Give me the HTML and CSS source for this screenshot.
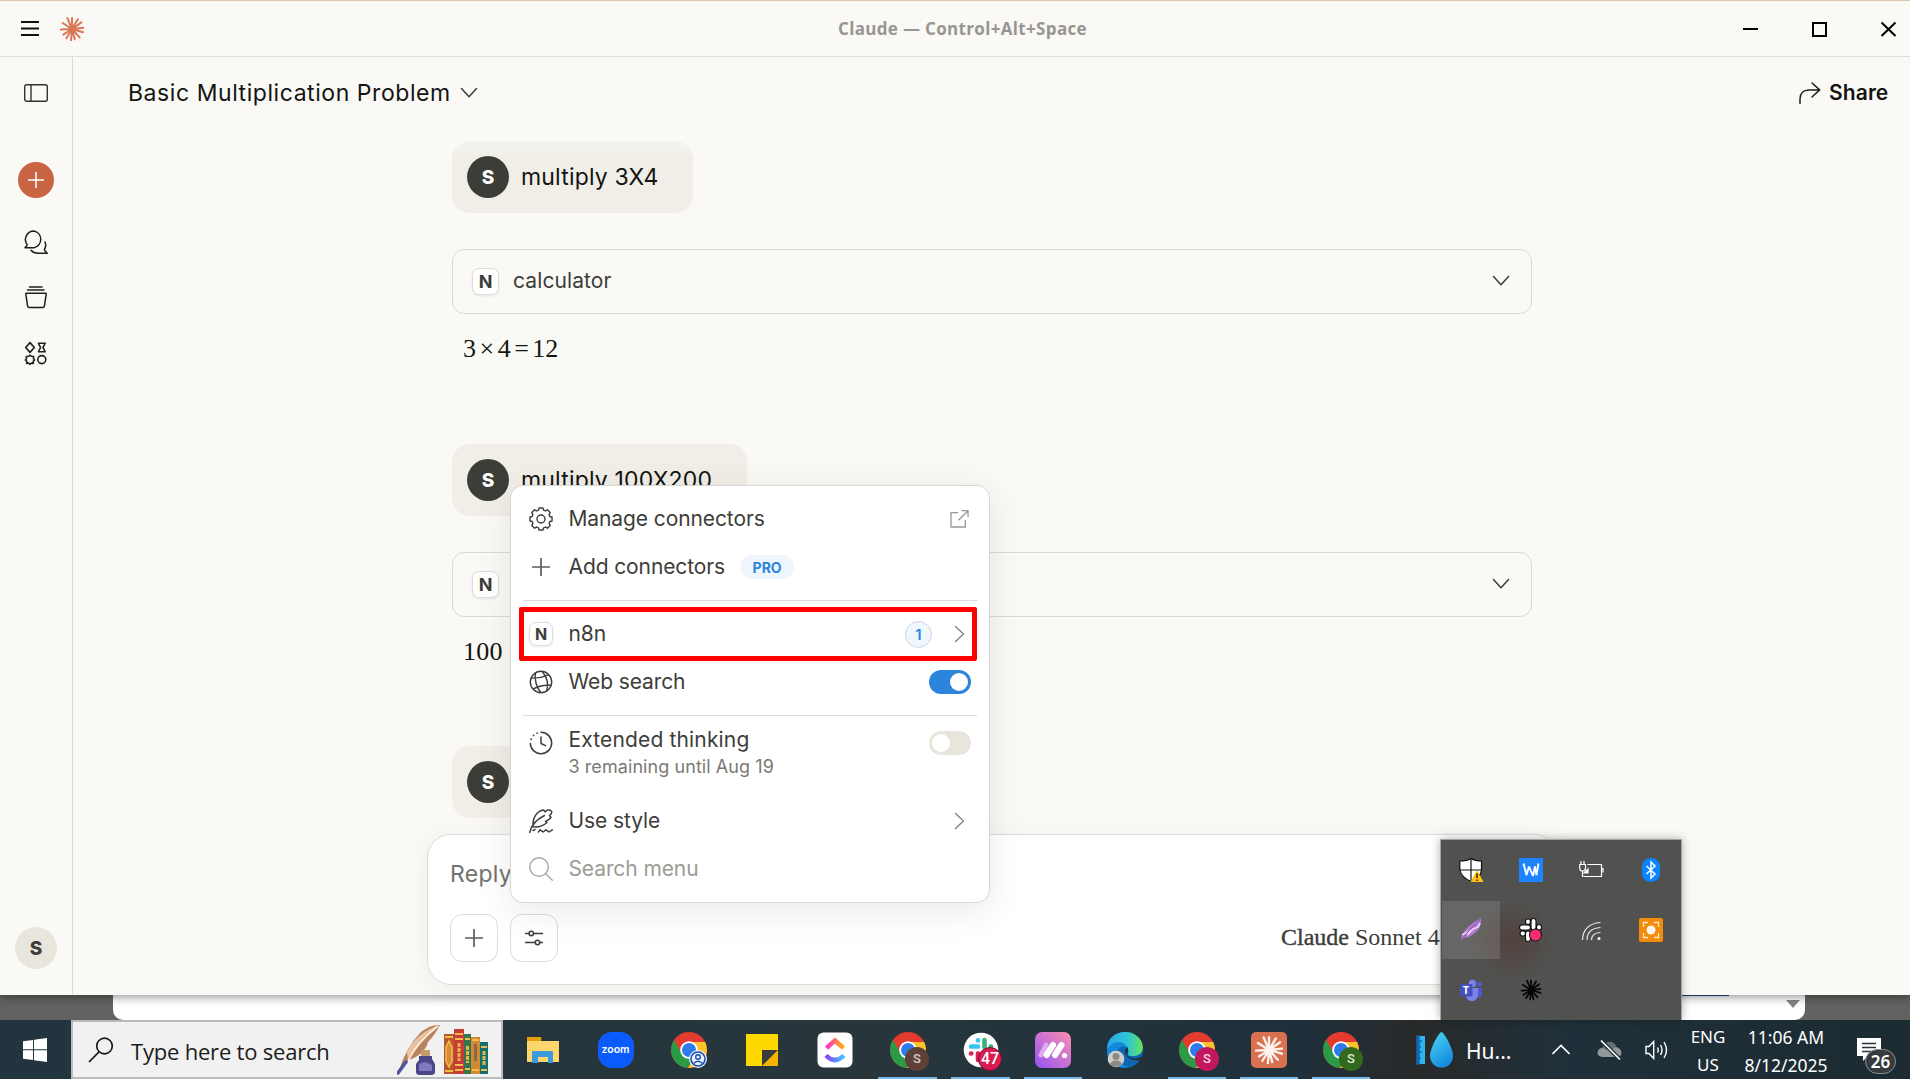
FILE: index.html
```html
<!DOCTYPE html>
<html lang="en">
<head>
<meta charset="utf-8">
<title>Claude</title>
<link rel="stylesheet" href="styles.css">
</head>
<body>
<svg class="defs" width="0" height="0" aria-hidden="true">
  <symbol id="burst" viewBox="-12 -12 24 24">
    <path d="M0 0V-11M0 0L5.8-9.8M0 0L9.4-6.6M0 0L11.2-1.2M0 0L11 3.2M0 0L7.6 8.4M0 0L2.8 10.4M0 0L-1 11.4M0 0L-5.6 9.2M0 0L-8.6 5.6M0 0L-11.2 .6M0 0L-9.4-6M0 0L-4.6-10.8" stroke="currentColor" stroke-width="2" stroke-linecap="round" fill="none"/>
    <circle r="3.2" fill="currentColor"/>
  </symbol>
  <symbol id="chrome" viewBox="0 0 36 36">
    <circle cx="18" cy="18" r="18" fill="#e33b2e"/>
    <path d="M18 10H34.1A18 18 0 0 1 16.88 35.94L24.93 22L18 18z" fill="#fcc42c"/>
    <path d="M3.02 8.06L11.07 22L18 18L24.93 22L16.88 35.94A18 18 0 0 1 3.02 8.06z" fill="#2b9a47"/>
    <circle cx="18" cy="18" r="8.8" fill="#fff"/><circle cx="18" cy="18" r="7" fill="#2f7bea"/>
  </symbol>
  <symbol id="down" viewBox="0 0 18 12"><path d="M1.5 1.5L9 9.8L16.5 1.5" fill="none" stroke="currentColor" stroke-width="1.5" stroke-linecap="round" stroke-linejoin="round"/></symbol>
  <symbol id="right" viewBox="0 0 12 18"><path d="M1.5 1.5L9.5 9L1.5 16.5" fill="none" stroke="currentColor" stroke-width="1.4" stroke-linecap="round" stroke-linejoin="round"/></symbol>
  <symbol id="plus" viewBox="0 0 18 18"><path d="M9 0V18M0 9H18" stroke="currentColor" stroke-width="1.7" fill="none"/></symbol>
</svg>

<div class="app">
  <header class="titlebar">
    <svg class="burger" viewBox="0 0 18 15"><path d="M0 1H18M0 7.5H18M0 14H18" stroke="#111" stroke-width="2"/></svg>
    <svg class="logo"><use href="#burst"/></svg>
    <div class="wintitle">Claude — Control+Alt+Space</div>
    <svg class="winctl" viewBox="0 0 154 16" fill="none" stroke="#000" stroke-width="2"><path d="M0 8H15"/><rect x="70" y="2" width="13" height="13"/><path d="M138.500 1.500L152.500 15M152.500 1.500L138.500 15"/></svg>
  </header>

  <div class="body">
    <nav class="side">
      <svg class="panel" viewBox="0 0 24 18" fill="none" stroke="#333330" stroke-width="1.4"><rect x=".7" y=".7" width="22.600" height="16.600" rx="2"/><path d="M7 1V17"/></svg>
      <span class="new"><svg width="18" height="18"><use href="#plus"/></svg></span>
      <svg class="chats" viewBox="0 0 24 24" fill="none" stroke="#1f1e1d" stroke-width="1.500" stroke-linecap="round" stroke-linejoin="round"><path d="M10 .9A8.600 8.600 0 0 1 10 17.700H1C2.500 16.500 3.300 15.600 3 14.400A8.600 8.600 0 0 1 10 .9zM21 12C22.200 14.800 21.800 17.300 20.300 19.400C20.600 20.900 22 21.800 23.200 23.200H15C11.500 23.400 8.800 22.400 7 20.300"/></svg>
      <svg class="box" viewBox="0 0 24 24" fill="none" stroke="#1f1e1d" stroke-width="1.500" stroke-linecap="round" stroke-linejoin="round"><path d="M5.500 2H18M3.500 5H20M2.500 8.200H21.500Q22.400 8.200 22.200 9.200L20.400 21.200Q20.200 22.600 18.800 22.600H5.200Q3.800 22.600 3.600 21.200L1.800 9.200Q1.600 8.200 2.500 8.200z"/></svg>
      <svg class="shapes" viewBox="0 0 24 24" fill="none" stroke="#1f1e1d" stroke-width="1.600" stroke-linejoin="round"><path d="M6 1.600L10.300 6.500L6 11.400L1.700 6.500zM13.800 2.200H21.800M13.800 10.800H21.800M14.800 2.200C15 5 16.500 5.500 16.500 6.500S15 8 14.800 10.800M20.800 2.200C20.600 5 19 5.500 19 6.500S20.600 8 20.800 10.800M6 14.200L7.500 15.300L9.700 15.500L9.400 17.500L10.600 19L9.200 20.300L9.400 22.400L7.400 22L6 23.300L4.600 22L2.600 22.400L2.800 20.300L1.400 19L2.600 17.500L2.300 15.500L4.500 15.300z"/><circle cx="17.800" cy="18.600" r="4"/></svg>
      <span class="me">S</span>
    </nav>

    <main class="main">
      <div class="chathead">
        <span class="chattitle">Basic Multiplication Problem</span><svg class="chev"><use href="#down"/></svg>
        <svg class="arrow" viewBox="0 0 22 23" fill="none" stroke="#1f1e1d" stroke-width="1.500" stroke-linecap="round" stroke-linejoin="round"><path d="M1 21.500V17C1 11.500 4.500 7.900 10 7.900H20.500M13 1L20.700 7.900L13 15"/></svg>
        <span class="share">Share</span>
      </div>
      <div class="thread">
        <div class="bubble fade"><span class="av">S</span><span class="msg">multiply 3X4</span></div>
        <div class="tool"><span class="n">N</span><span class="tname">calculator</span><svg class="chev"><use href="#down"/></svg></div>
        <p class="answer">3 × 4 = 12</p>
        <div class="bubble"><span class="av">S</span><span class="msg">multiply 100X200</span></div>
        <div class="tool"><span class="n">N</span><svg class="chev"><use href="#down"/></svg></div>
        <p class="answer last">100</p>
        <div class="bubble short"><span class="av">S</span></div>
      </div>
      <div class="composer">
        <div class="reply">Reply</div>
        <div class="tools">
          <span class="btn"><svg width="18" height="18"><use href="#plus"/></svg></span>
          <span class="btn"><svg width="20" height="18" viewBox="0 0 20 18" fill="none" stroke="#3d3d3a" stroke-width="1.500"><path d="M1 4.500H5M9.500 4.500H19M1 13.500H11M16 13.500H19"/><circle cx="7.300" cy="4.500" r="2.200"/><circle cx="13.500" cy="13.500" r="2.200"/></svg></span>
          <span class="model"><b>Claude</b> Sonnet 4</span>
        </div>
      </div>
    </main>
  </div>

  <div class="menu">
    <div class="row"><svg class="ic" viewBox="-12 -12 24 24" fill="none" stroke="#3d3d3a" stroke-width="1.400" stroke-linejoin="round"><path d="M11.030-1.950V1.950L8.840 2.540L8.050 4.460L9.170 6.420L6.420 9.170L4.460 8.050L2.540 8.840L1.950 11.030H-1.950L-2.540 8.840L-4.460 8.050L-6.420 9.170L-9.170 6.420L-8.050 4.460L-8.840 2.540L-11.030 1.950V-1.950L-8.840-2.540L-8.050-4.460L-9.170-6.420L-6.420-9.170L-4.460-8.050L-2.540-8.840L-1.950-11.030H1.950L2.540-8.840L4.460-8.050L6.420-9.170L9.170-6.420L8.050-4.460L8.840-2.540z"/><circle r="4"/></svg><span class="lab">Manage connectors</span><svg class="ext" viewBox="0 0 20 20" fill="none" stroke="#9a9893" stroke-width="1.300"><path d="M9 3.700H2V18H16.300V11M12.500 1.700H19V8M19 1.700L9.500 11.200"/></svg></div>
    <div class="row"><svg class="ic" viewBox="-3 -3 24 24" color="#5e5d59"><use href="#plus" width="18" height="18"/></svg><span class="lab">Add connectors</span><span class="pro">PRO</span></div>
    <hr>
    <div class="row"><span class="n small">N</span><span class="lab">n8n</span><span class="count">1</span><svg class="go"><use href="#right"/></svg></div>
    <div class="row"><svg class="ic" viewBox="-12 -12 24 24" fill="none" stroke="#3d3d3a" stroke-width="1.400"><circle r="10.700"/><path d="M-5.500-9.300C-7-2 -4 6 0 10.700M1-10.700C6-5 8 2 5.500 9.300M-10-4C-4-3.500 3-5 8-7.300M-8 7.300C-4 4.500 4 3 10.300 3.300"/></svg><span class="lab">Web search</span><span class="toggle on"></span></div>
    <hr>
    <div class="row tall"><svg class="ic" viewBox="-12 -12 24 24" fill="none" stroke="#3d3d3a" stroke-width="1.500" stroke-linecap="round" stroke-linejoin="round"><path d="M0-10.700A10.700 10.700 0 1 1-10.700 .5M0-6V.5L4.500 2.700"/><path d="M-3.900-9.900h.01M-7.400-7.600h.01M-9.900-3.800h.01" stroke-width="1.800"/></svg><span class="stack"><span class="lab">Extended thinking</span><span class="sub">3 remaining until Aug 19</span></span><span class="toggle"></span></div>
    <div class="row"><svg class="ic" viewBox="0 0 24 24" fill="none" stroke="#3d3d3a" stroke-width="1.500" stroke-linecap="round" stroke-linejoin="round"><path d="M.8 23.300C2 17.500 6.500 11 15.500 6.500M4.200 16.500C3 9.500 8 1.500 14.500 .9L16 2.800L18.500 1C23.500 .5 24 4 20.500 6.500L22 8.500C20 11 18 11.500 16.500 12.300L18 13.500C14 17 8.500 18.500 3.800 17.800M4 21.500L6 20.500M9.500 23C10.500 22 10.800 21 11.300 20.800L14 23L17 20.800L20 23L23.300 20.800"/></svg><span class="lab">Use style</span><svg class="go"><use href="#right"/></svg></div>
    <div class="row"><svg class="ic" viewBox="0 0 24 24" fill="none" stroke="#a9a8a4" stroke-width="1.400" stroke-linecap="round"><circle cx="10" cy="10" r="9.300"/><path d="M16.800 16.800L23.300 23.300"/></svg><span class="lab dim">Search menu</span></div>
    <div class="highlight"></div>
  </div>
</div>

<div class="behind"><div class="page"><i class="blueline"></i><i class="scroll"></i></div></div>

<div class="taskbar">
  <div class="start"><svg width="24" height="24" viewBox="0 0 24 24" fill="#fff"><path d="M0 3.300L10 2V11.300H0zM11 1.800L24 0V11.300H11zM0 12.300H10V22L0 20.700zM11 12.300H24V24L11 22.200z"/></svg></div>
  <div class="search">
    <svg class="glass" viewBox="0 0 26 26" fill="none" stroke="#1a1a1a" stroke-width="1.700"><circle cx="16.500" cy="9" r="7.800"/><path d="M11 14.800L1 25"/></svg>
    <span class="hint">Type here to search</span>
    <svg class="books" viewBox="0 0 92 52">
      <path d="M2 46Q10 22 24 8Q34 0 43 1Q38 11 31 18Q28 30 12 36z" fill="#b98560"/><path d="M10 28Q18 10 42 1Q28 12 20 22Q13 31 11 36z" fill="#e8c2a0"/><path d="M11 37Q20 18 41 2" stroke="#fff1dc" stroke-width="1.600" fill="none"/><path d="M9 38L1 49" stroke="#4a559c" stroke-width="3.500" stroke-linecap="round"/>
      <rect x="24" y="26" width="9" height="6" rx="1" fill="#c99b66"/><path d="M22 32H35V35L38 40V48Q38 51 34 51H23Q19 51 19 48V40L22 36z" fill="#4b4686"/><path d="M22 40Q28 36 35 41V47H22z" fill="#8078c0"/>
      <rect x="47" y="10" width="10" height="40" fill="#b8562c"/><rect x="57" y="5" width="10" height="45" fill="#c63b37"/><rect x="67" y="10" width="7" height="40" fill="#33764f"/><rect x="74" y="13" width="9" height="37" fill="#d08a35"/><rect x="83" y="18" width="8" height="32" fill="#137070"/>
      <path d="M48 13H56M48 47H56M58 10H66M58 15H66M58 41H66M58 46H66M68 15H73M68 45H73M75 16H82M75 46H82M84 23H90M84 46H90" stroke="#f0bd4a" stroke-width="2"/><path d="M52 17L55 23V37L52 43L49 37V23z" fill="#d98b3a" stroke="#f0bd4a" stroke-width="1.500"/><path d="M62 19V37M70.500 22V39M87 27V41" stroke="#e6b549" stroke-width="3" stroke-dasharray="4 1"/><path d="M78.500 20V37" stroke="#8a6a45" stroke-width="3"/>
    </svg>
  </div>
  <div class="apps">
    <div class="a"><svg viewBox="0 0 36 36"><path d="M2 5H16V9H34V30H2z" fill="#ffd66b"/><path d="M2 5H15Q17 5 16 9H2z" fill="#e3a008"/><path d="M7 31V20Q7 19 8 19H27Q28 19 28 20V31H23V25H13V31z" fill="#3a9be0"/></svg></div>
    <div class="a"><svg viewBox="0 0 36 36"><rect width="36" height="36" rx="14" fill="#0b5cff"/></svg><span class="zoomtxt">zoom</span></div>
    <div class="a"><svg viewBox="0 0 36 36"><use href="#chrome"/><circle cx="27" cy="27" r="9" fill="#e8f0fe"/><circle cx="27" cy="27" r="7" fill="none" stroke="#1d4fb5" stroke-width="1.600"/><circle cx="27" cy="25" r="2.300" fill="none" stroke="#1d4fb5" stroke-width="1.400"/><path d="M22.500 31.500Q27 27 31.500 31.500" fill="none" stroke="#1d4fb5" stroke-width="1.500"/></svg></div>
    <div class="a"><svg viewBox="0 0 36 36"><path d="M2 2H34V18L18 34H2z" fill="#fdd900"/><path d="M18 18H34L18 34z" fill="#3a3a3a"/><path d="M34 18V34H18z" fill="#f4b400"/></svg></div>
    <div class="a"><svg viewBox="0 0 36 36"><defs><linearGradient id="cu1"><stop stop-color="#ff2bd0"/><stop offset="1" stop-color="#ffb000"/></linearGradient><linearGradient id="cu2"><stop stop-color="#8a3ffc"/><stop offset="1" stop-color="#45c8ff"/></linearGradient></defs><rect x=".5" y=".5" width="35" height="35" rx="6" fill="#fff"/><path d="M9.500 16L18 8.500L26.500 16" fill="none" stroke="url(#cu1)" stroke-width="4.500"/><path d="M9 23.500Q18 32.500 27 23.500" fill="none" stroke="url(#cu2)" stroke-width="4.500"/></svg></div>
    <div class="a open"><svg viewBox="0 0 36 36"><use href="#chrome"/></svg><span class="badge brown">S</span></div>
    <div class="a open"><svg viewBox="0 0 36 36"><circle cx="18" cy="18" r="17.300" fill="#fff"/><g stroke-width="4.600" stroke-linecap="round" fill="none"><path d="M8 14.500H15M15 8.300V8.500" stroke="#36c5f0"/><path d="M21.500 8V15M28 14.500H27.800" stroke="#2eb67d"/><path d="M21.500 21.500H28M21.500 28V27.800" stroke="#ecb22e"/><path d="M15 21.500V28M8 21.500H8.300" stroke="#e01e5a"/></g></svg><span class="badge n47">47</span></div>
    <div class="a w72 open"><svg viewBox="0 0 36 36"><defs><linearGradient id="mk" x1="0" y1="1" x2="1" y2="0"><stop stop-color="#9552f6"/><stop offset="1" stop-color="#fb90af"/></linearGradient></defs><rect width="36" height="36" rx="7" fill="url(#mk)"/><path d="M6 23L11 13" stroke="#e0a9f3" stroke-width="5" stroke-linecap="round"/><path d="M11.500 23L18 13M20 23L26.500 13" stroke="#fff" stroke-width="6" stroke-linecap="round"/><circle cx="29.500" cy="23.500" r="2.600" fill="#fff"/></svg></div>
    <div class="a w72"><svg viewBox="0 0 36 36"><defs><linearGradient id="ed"><stop stop-color="#24a9ef"/><stop offset=".6" stop-color="#2fc6d0"/><stop offset="1" stop-color="#68e553"/></linearGradient></defs><circle cx="18" cy="18" r="18" fill="#0d67b5"/><path d="M0 17C0-5 35-6 36 16C35 25 24 25 21 23C24 14 12 6 0 17z" fill="url(#ed)"/><path d="M0 18C5 8 16 8 20 15C13 13 9 18 11 24Q14 35 22 35C9 38-1 30 0 18z" fill="#1188da"/><path d="M20 23C25 28 31 27 37 23V29.500L32 28.500Q22 29 18 21.500Q17 17 20.500 15Q22 18 20 23z" fill="#24323b"/><circle cx="9" cy="27" r="8.300" fill="#d0cecb"/><circle cx="9" cy="24.500" r="3.500" fill="#8b8782"/><path d="M3 32.500Q4 28.500 9 28.500T15 32.500Q9 37 3 32.500z" fill="#8b8782"/></svg></div>
    <div class="a w72 open"><svg viewBox="0 0 36 36"><use href="#chrome"/></svg><span class="badge pink">S</span></div>
    <div class="a w72 open"><svg viewBox="0 0 36 36" color="#fdf3ee"><rect width="36" height="36" rx="5" fill="#d97150"/><use href="#burst" x="4" y="4" width="28" height="28"/></svg></div>
    <div class="a w72 open"><svg viewBox="0 0 36 36"><use href="#chrome"/></svg><span class="badge green">S</span></div>
  </div>
  <div class="weather"><svg width="38" height="38" viewBox="0 0 38 38"><defs><linearGradient id="dr" x1="0" x2=".5" y2="1"><stop stop-color="#4fd5f5"/><stop offset="1" stop-color="#158de0"/></linearGradient></defs><rect x="1" y="5" width="8" height="28" fill="#2fb4f0"/><path d="M1 5H3V33H1zM3 10H6M3 16H5M3 21H6M3 27H5" stroke="#1268b0" stroke-width="1.500" fill="#1268b0"/><path d="M25.500 1C28 1 37 17 37 25A11.500 11.500 0 0 1 14 25C14 17 23 1 25.500 1z" fill="url(#dr)"/></svg><span>Hu...</span></div>
  <div class="sys">
    <svg class="up" viewBox="0 0 18 11" fill="none" stroke="#fff" stroke-width="1.600"><path d="M.5 10L9 1.500L17.500 10"/></svg>
    <svg class="cloud" viewBox="0 0 25 20"><path d="M5 17Q0 16 .6 12Q1.500 8 5.500 8Q8 1 14 2Q18 3 19 7Q24 8 24.500 13Q24 17 20 17z" fill="#929799"/><path d="M5.500 8Q8 1 14 2Q18 3 19 7L12 11z" fill="#666e72"/><path d="M4 .5L23 19.500" stroke="#26343b" stroke-width="4"/><path d="M4 .5L23 19.500" stroke="#fff" stroke-width="1.500"/></svg>
    <svg class="vol" viewBox="0 0 24 20" fill="none" stroke="#fff" stroke-width="1.400"><path d="M1 6.500H4L8.700 1.500V18.500L4 13.500H1zM12.500 7.500Q14 10 12.500 12.500M15.500 5Q18.500 10 15.500 15M19 2Q24 10 19 18"/></svg>
    <div class="lang">ENG<br>US</div>
    <div class="clock">11:06 AM<br>8/12/2025</div>
    <div class="notif"><svg width="24" height="24" viewBox="0 0 24 24"><path d="M0 0H24V18H11L6 23V18H0z" fill="#fff"/><path d="M5 5.500H19M5 9.500H19M5 13.500H19" stroke="#25323a" stroke-width="1.300"/></svg><span class="cnt">26</span></div>
  </div>
</div>

<div class="tray">
  <span class="c"><svg viewBox="0 0 24 24"><path d="M12 .5Q16 3 22.500 3V12Q22 19 12 23.500Q2 19 .8 12V3Q8 3 12 .5z" fill="#fff" stroke="#111" stroke-width="1.200"/><path d="M12 1V23M1 12H22.500" stroke="#111" stroke-width="1.200"/><path d="M18 12L24.500 24H11.500z" fill="#fdbf12"/><path d="M18 15.500V20M18 21.500V23" stroke="#111" stroke-width="1.300"/></svg></span>
  <span class="c"><svg viewBox="0 0 24 24"><rect width="24" height="24" fill="#1d84ff"/><path d="M4.500 5.500L7.500 17L10 8.500L14 18L16 8.500L17.500 17L19.500 5.500" fill="none" stroke="#fff" stroke-width="1.900" stroke-linejoin="bevel"/></svg></span>
  <span class="c"><svg viewBox="0 0 24 24" fill="none" stroke="#fff" stroke-width="1.200"><path d="M8.500 6.500H22.500V18.500H4.500M22.500 10.500H24V14.500M3.500 13V19M.7 6.500H6.500V10Q6.500 13 3.600 13T.7 10zM2 3V6M5 3V6"/><path d="M5 15L9 11V15z" fill="#fff"/></svg></span>
  <span class="c"><svg viewBox="0 0 24 24"><rect x="3" width="18" height="24" rx="8.500" fill="#0a84ff"/><path d="M7.500 8L16 16L12 20V4L16 8L7.500 16" fill="none" stroke="#fff" stroke-width="1.500"/></svg></span>
  <span class="c sel"><svg viewBox="0 0 24 24"><path d="M2 23Q2 15 10 8Q16 3 22 0Q23 7 18 13Q12 19 5 20z" fill="#a968cd"/><path d="M3 17L10 13L8 17L14 11L19 9L21 5" stroke="#e6c7f7" stroke-width="1.800" fill="none"/><path d="M1.500 23.500Q9 12 21.500 1" stroke="#6d3596" stroke-width="1" fill="none"/></svg></span>
  <span class="c"><svg viewBox="0 0 24 24"><g stroke-linecap="round"><path d="M3 9.500H9M9 3.500V4M14.500 3V9.500M20 9.500V9M3.500 15.500H4M9 15.500V21M14.500 15.500H20" stroke="#111" stroke-width="6"/><path d="M3 9.500H9M9 3.500V4M14.500 3V9.500M20 9.500V9M3.500 15.500H4M9 15.500V21M14.500 15.500H20" stroke="#fff" stroke-width="3.800"/></g><circle cx="16.500" cy="17" r="6" fill="#f62d73" stroke="#151515"/></svg></span>
  <span class="c"><svg viewBox="0 0 24 24" fill="none" stroke="#e8e8e8" stroke-width="1.200"><path d="M3.500 22Q4 6 21.500 4.500M8 22Q8 10.500 21.500 9.500M12.500 22Q12.500 15 21.500 14.500"/><circle cx="20" cy="20.500" r="1.500" fill="#fff" stroke="none"/></svg></span>
  <span class="c"><svg viewBox="0 0 24 24"><rect width="24" height="24" rx="2" fill="#f38b0b"/><circle cx="12" cy="12" r="4.500" fill="#fff6e8"/><path d="M4.500 9V4.500H9M15 4.500H19.500V9M19.500 15V19.500H15M9 19.500H4.500V15" fill="none" stroke="#ffe9c9" stroke-width="1.300"/></svg></span>
  <span class="c"><svg viewBox="0 0 24 24"><circle cx="13.500" cy="5.500" r="3.700" fill="#7b83eb"/><circle cx="20.500" cy="6" r="2.600" fill="#5059c9"/><path d="M17 10H23V17Q22 20 18 19z" fill="#5059c9"/><path d="M8 10H19V17Q18 23 13 23T7 18z" fill="#7b83eb"/><rect x="1" y="6" width="12.500" height="12.500" rx="1" fill="#4550bd"/></svg><b class="tee">T</b></span>
  <span class="c"><svg viewBox="0 0 24 24" color="#050505"><use href="#burst" x="1.500" y="1.500" width="21" height="21"/></svg></span>
</div>
</body>
</html>
```
FILE: styles.css
```css
* { box-sizing: border-box; }
body { margin: 0; width: 1910px; height: 1079px; overflow: hidden; position: relative; display: flex; flex-direction: column; font-family: "Inter", "Noto Sans", sans-serif; background: #646260; color: #141413; }
svg { display: block; flex: none; }
.defs { position: absolute; }

.app { position: relative; z-index: 1; height: 995px; flex: none; display: flex; flex-direction: column; background: #faf9f5; border-top: 1px solid #dcc5b3; box-shadow: 0 1px 10px rgba(0,0,0,.5); }
.titlebar { height: 56px; flex: none; display: flex; align-items: center; padding: 0 13px 0 21px; border-bottom: 1px solid #dededa; }
.burger { width: 18px; height: 15px; }
.logo { width: 24px; height: 24px; margin-left: 21px; color: #d97757; }
.wintitle { width: 250px; margin-left: 754px; font: 700 17px "Open Sans", "Noto Sans", sans-serif; letter-spacing: .33px; color: #979692; white-space: nowrap; }
.winctl { width: 154px; height: 16px; margin-left: auto; }

.body { flex: 1; display: flex; min-height: 0; }
.side { width: 73px; border-right: 1px solid #dbdad5; display: flex; flex-direction: column; align-items: center; padding-top: 27px; }
.panel { width: 24px; height: 18px; }
.new { width: 36px; height: 36px; margin-top: 60px; border-radius: 50%; background: #c96442; color: #fff; display: grid; place-items: center; }
.new svg { width: 16px; height: 16px; }
.chats, .box, .shapes { width: 24px; height: 24px; margin-top: 32px; }
.box { margin-top: 31px; }
.me { margin-top: auto; margin-bottom: 26px; width: 42px; height: 42px; border-radius: 50%; background: #e8e6dc; color: #3d3d3a; font-weight: 800; font-size: 19px; display: grid; place-items: center; }

.main { flex: 1; display: flex; flex-direction: column; min-width: 0; }
.chathead { height: 72px; flex: none; display: flex; align-items: center; padding: 0 20px 0 55px; }
.chev { width: 18px; height: 12px; color: #3d3d3a; }
.chathead .chev { margin-left: 10px; }
.chattitle { font-size: 23px; letter-spacing: .56px; white-space: nowrap; width: 322px; }
.arrow { width: 22px; height: 23px; margin-left: auto; }
.share { margin-left: 8px; margin-right: 1px; padding-bottom: 1px; font-size: 21px; font-weight: 600; letter-spacing: .1px; width: 60px; }
.thread { flex: 1; min-height: 0; overflow: hidden; margin-left: 379px; width: 1080px; padding-top: 12px; }
.bubble { width: fit-content; height: 72px; display: flex; align-items: center; padding: 0 35px 0 15px; border-radius: 18px; background: #f0eee6; }
.short { width: 240px; }
.fade { background: linear-gradient(#f4f3ee, #f0eee6 30%); }
.av { width: 42px; height: 42px; border-radius: 50%; background: #3d3d38; color: #fff; font-weight: 800; font-size: 19px; display: grid; place-items: center; }
.msg { margin-left: 12px; font-size: 23px; letter-spacing: .18px; white-space: nowrap; }
.tool { margin-top: 36px; height: 65px; border: 1px solid #dad9d4; border-radius: 12px; display: flex; align-items: center; padding: 0 21px 0 19px; }
.tool .chev { margin-left: auto; margin-bottom: 1px; }
.n { width: 27px; height: 27px; border: 1px solid #deddd9; border-radius: 7px; background: #fff; box-shadow: 0 1px 3px rgba(0,0,0,.08); color: #3d3d3a; font-weight: 700; font-size: 18px; display: grid; place-items: center; }
.tname { margin-left: 14px; font-size: 21px; line-height: 24px; letter-spacing: .1px; padding-bottom: 1px; color: #3d3d3a; }
.answer { margin: 0 0 78px; height: 52px; padding: 17px 0 0 11px; font: 26px/36px "Liberation Serif", serif; word-spacing: -3px; white-space: nowrap; }
.answer.last { margin-bottom: 77px; letter-spacing: .3px; }
.composer { flex: none; width: 1131px; height: 151px; margin: 0 0 10px 354px; border: 1px solid #deddd8; border-radius: 24px; background: #fff; box-shadow: 0 3px 24px rgba(0,0,0,.05); display: flex; flex-direction: column; padding: 20px 22px 22px; }
.reply { font-size: 23px; line-height: 38px; letter-spacing: .3px; color: #73726c; }
.tools { margin-top: auto; display: flex; align-items: center; }
.btn { width: 48px; height: 48px; margin-right: 12px; border: 1px solid #dcdbd7; border-radius: 12px; display: grid; place-items: center; color: #5e5d59; }
.model { margin-left: 711px; padding-bottom: 1px; font: 24px "Liberation Serif", serif; color: #3d3d3a; white-space: nowrap; }
.model b { font-weight: 500; -webkit-text-stroke: .4px #3d3d3a; }

.menu { position: absolute; left: 510px; top: 484px; width: 480px; height: 418px; padding: 9px 12px; border: 1px solid #d9d8d4; border-radius: 13px; background: #fff; box-shadow: 0 8px 36px rgba(0,0,0,.09); color: #3d3d3a; }
.row { height: 48px; display: flex; align-items: center; padding: 0 6px; }
.tall { height: 72px; align-items: flex-start; }
.ic { width: 24px; height: 24px; }
.tall .ic { margin-top: 6px; }
.row .n { width: 24px; height: 24px; font-size: 16px; }
.lab { margin-left: 15.5px; padding-bottom: 1px; font-size: 21px; letter-spacing: -.1px; white-space: nowrap; }
.dim { color: #9c9a95; }
.stack { display: flex; flex-direction: column; }
.stack .lab { line-height: 30px; padding-bottom: 0; letter-spacing: .15px; }
.sub { margin-left: 15.5px; font-size: 18px; line-height: 24px; letter-spacing: .07px; color: #7a7974; white-space: nowrap; }
.menu hr { height: 1px; margin: 9px 0; border: 0; background: #dcdbd7; }
.ext { width: 20px; height: 20px; margin-left: auto; margin-right: 2px; }
.go { width: 12px; height: 18px; margin-right: 5px; color: #85837e; }
.lab + .go { margin-left: auto; }
.pro { margin-left: 15px; width: 54px; height: 24px; border-radius: 12px; background: #eff6fe; color: #2c84db; font-size: 14px; font-weight: 700; display: grid; place-items: center; }
.count { margin-left: auto; margin-right: 22px; width: 27px; height: 27px; border: 1px solid #cfd5dc; border-radius: 50%; background: #eff6fe; color: #2c84db; font-size: 15px; font-weight: 600; display: grid; place-items: center; }
.toggle { margin-left: auto; width: 42px; height: 24px; border-radius: 12px; background: #e8e6dc; padding: 3px; display: flex; }
.toggle::before { content: ""; width: 18px; height: 18px; border-radius: 50%; background: #fff; }
.toggle.on { background: #2c84db; justify-content: flex-end; }
.tall .toggle { margin-top: 6px; }
.highlight { position: absolute; left: 8px; top: 121px; width: 458px; height: 54px; border: 5px solid #fe0000; border-radius: 2px; }

.behind { height: 25px; flex: none; padding: 0 105px 0 113px; }
.page { height: 25px; background: #fff; border-radius: 0 0 10px 10px; display: flex; align-items: flex-start; }
.blueline { width: 48px; height: 1px; margin-left: 1568px; background: #1a4f8b; }
.scroll { margin: 5px 0 0 57px; border: 7.5px solid transparent; border-top: 8px solid #858585; border-bottom: 0; }

.taskbar { position: relative; z-index: 2; height: 59px; flex: none; display: flex; color: #fff; background: linear-gradient(90deg, #22343e, #28363c 45%, #1f303b 68%, #282a2a 74%, #20303a 82%, #1c2a31); font-family: "Noto Sans", "Open Sans", sans-serif; }
.start { width: 71px; display: grid; place-items: center; padding-right: 1px; }
.search { width: 432px; border: 2px solid #b9bbbc; background: #f1f1f1; display: flex; align-items: center; padding-left: 15px; }
.glass { width: 26px; height: 26px; }
.hint { margin-left: 17px; width: 198px; padding-top: 2px; font: 22px "Open Sans", sans-serif; letter-spacing: -.2px; color: #1c1c1c; white-space: nowrap; }
.books { width: 92px; height: 52px; margin-left: 68px; }
.apps { margin-left: 3px; width: 872px; display: flex; }
.a { position: relative; width: 73px; display: grid; place-items: center; }
.w72 { width: 72px; }
.a svg { width: 36px; height: 36px; }
.open::after { content: ""; position: absolute; left: 7px; right: 7px; bottom: 0; height: 2px; background: #76b9ed; }
.zoomtxt { position: absolute; font: 600 10.5px "Inter", sans-serif; }
.badge { position: absolute; left: 34px; top: 27px; width: 24px; height: 24px; border-radius: 50%; font: 500 13px/24px Roboto, sans-serif; text-align: center; }
.brown { background: #5d4037; color: #d8cdc9; }
.pink { background: #c2185b; color: #fbd9e6; }
.green { background: #33691e; color: #dcebd4; }
.n47 { background: #d91c53; border: 1px solid #70102d; font-size: 16px; line-height: 22px; }
.weather { margin-left: 38px; width: 130px; display: flex; align-items: center; gap: 12px; font-size: 21px; }
.weather span { padding-top: 2px; }
.sys { display: flex; align-items: center; font-size: 17px; }
.up { width: 18px; height: 11px; margin-left: 6px; }
.cloud { width: 25px; height: 20px; margin-left: 27px; }
.vol { width: 24px; height: 20px; margin-left: 23px; }
.lang, .clock { padding-top: 2px; line-height: 28px; text-align: center; white-space: nowrap; }
.lang { width: 40px; margin-left: 19px; }
.clock { width: 90px; margin-left: 13px; font-size: 17.5px; }
.notif { position: relative; margin-left: 26px; }
.cnt { position: absolute; left: 8px; top: 11px; width: 31px; height: 25px; border: 1px solid #8b9093; border-radius: 13px; background: #353b3e; font: 600 17px/23px "Noto Sans", sans-serif; text-align: center; }

.tray { position: absolute; z-index: 3; left: 1440px; top: 839px; width: 242px; height: 181px; border: 1px solid #a3a3a1; border-bottom: 0; background: radial-gradient(circle at 72px 101px, #52413d 0, rgba(82,65,61,.6) 16px, transparent 38px), #51514f; box-shadow: 0 0 9px rgba(0,0,0,.3); display: grid; grid-template-columns: repeat(4, 60px); grid-template-rows: repeat(3, 60px); }
.c { position: relative; display: grid; place-items: center; }
.c svg { width: 24px; height: 24px; overflow: visible; }
.sel::before { content: ""; position: absolute; left: 1px; top: 1px; width: 58px; height: 58px; background: rgba(255,255,255,.12); }
.tee { position: absolute; left: 20px; top: 22px; width: 10px; font: 700 11px/16px "Open Sans", sans-serif; color: #fff; text-align: center; }
```
